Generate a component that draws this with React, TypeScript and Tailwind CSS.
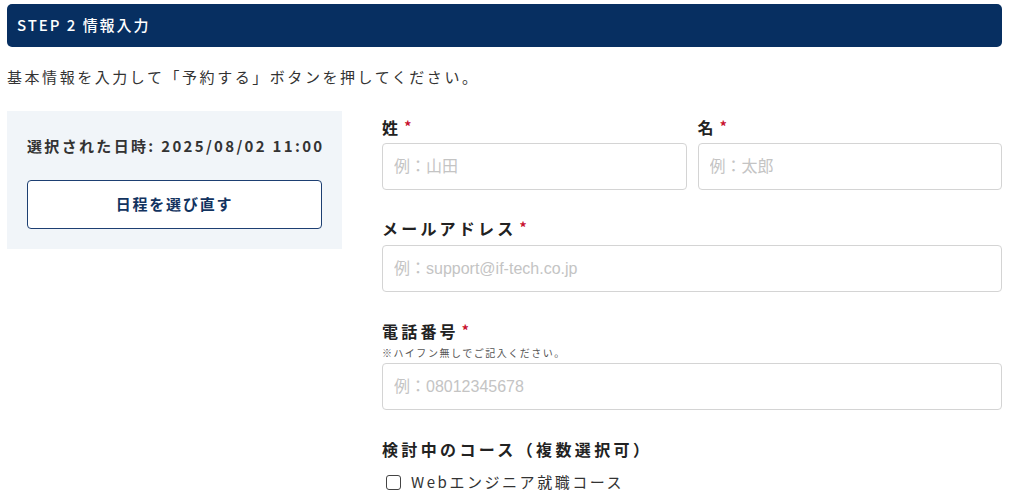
import React from "react";

const jp = { fontFamily: '"Noto Sans CJK JP", "Noto Sans", sans-serif' };
const ph = { fontFamily: '"Liberation Sans", "Noto Sans CJK JP", sans-serif' };

function Label({ text }: { text: string }) {
  return (
    <div className="h-6 flex items-center text-[16px] font-bold tracking-[0.2em] text-[#222]">
      {text}
      <span className="text-[#c8102e] text-[14px] ml-[3px] -mt-[2px]">*</span>
    </div>
  );
}

function Input({ placeholder }: { placeholder: string }) {
  return (
    <input
      style={ph}
      placeholder={placeholder}
      className="w-full h-[47px] border border-[#d4d4d4] rounded-[4px] px-[11px] text-[16px] text-[#333] placeholder:text-[#c4c4c4] outline-none bg-white"
    />
  );
}

export default function App() {
  return (
    <div style={jp} className="w-[1024px] h-[504px] bg-white overflow-hidden px-[7px] pt-[4px] text-[#333]">
      <div className="w-[995px] h-[43px] rounded-[5px] bg-[#072f61] flex items-center pl-[10px] text-white text-[15px] font-medium tracking-[0.13em]">
        STEP 2 情報入力
      </div>
      <div className="mt-[18px] h-6 flex items-center text-[15px] tracking-[0.17em] text-[#333]">
        基本情報を入力して「予約する」ボタンを押してください。
      </div>
      <div className="mt-[22px] flex gap-[40px] w-[995px]">
        <div className="w-[335px] shrink-0 self-start bg-[#f1f5f9] px-[20px] pt-[25px] pb-[20px]">
          <div className="h-5 flex items-center text-[15px] font-bold tracking-[0.155em] text-[#333] whitespace-nowrap">
            選択された日時: 2025/08/02 11:00
          </div>
          <button className="mt-[24px] w-full h-[49px] rounded-[4px] border border-[#1d3f72] bg-white text-[#12335f] text-[15px] font-bold tracking-[0.12em]">
            日程を選び直す
          </button>
        </div>
        <div className="flex-1 pt-[4px]">
          <div className="flex gap-[11px]">
            <div className="flex-1">
              <Label text="姓" />
              <div className="mt-[4px]"><Input placeholder="例：山田" /></div>
            </div>
            <div className="flex-1">
              <Label text="名" />
              <div className="mt-[4px]"><Input placeholder="例：太郎" /></div>
            </div>
          </div>
          <div className="mt-[26px]">
            <Label text="メールアドレス" />
            <div className="mt-[5px]"><Input placeholder="例：support@if-tech.co.jp" /></div>
          </div>
          <div className="mt-[27px]">
            <Label text="電話番号" />
            <div className="mt-[2px] h-[14px] flex items-center text-[10px] tracking-[0.15em] text-[#555]">
              ※ハイフン無しでご記入ください。
            </div>
            <div className="mt-[4px]"><Input placeholder="例：08012345678" /></div>
          </div>
          <div className="mt-[27px]">
            <div className="h-6 flex items-center text-[16px] font-bold tracking-[0.21em] text-[#222]">
              検討中のコース（複数選択可）
            </div>
            <label className="mt-[9px] flex items-center gap-[10px] pl-[4px] h-6">
              <span className="w-[15px] h-[15px] border-[1.5px] border-[#444] rounded-[3px] bg-white" />
              <span className="text-[15px] tracking-[0.17em] text-[#333]">Webエンジニア就職コース</span>
            </label>
          </div>
        </div>
      </div>
    </div>
  );
}
